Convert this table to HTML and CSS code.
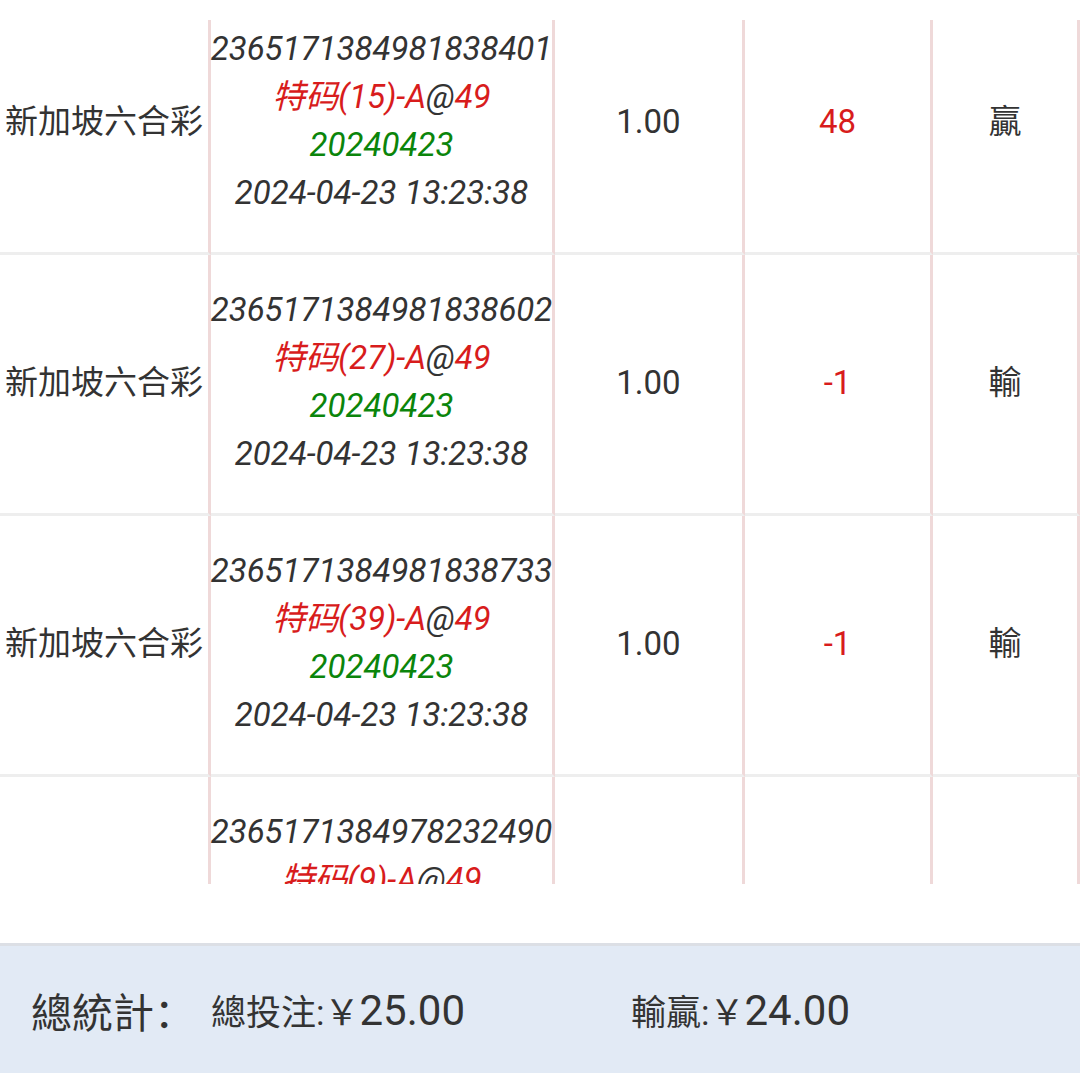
FILE: index.html
```html
<!DOCTYPE html>
<html lang="zh">
<head>
<meta charset="utf-8">
<link rel="stylesheet" href="styles.css">
</head>
<body>
<div class="page">
  <div class="list">
    <div class="table">
      <div class="row">
        <div class="cell name">新加坡六合彩</div>
        <div class="cell info">
          <div class="line">2365171384981838401</div>
          <div class="line"><span class="red">特码(15)-A</span>@<span class="red">49</span></div>
          <div class="line green">20240423</div>
          <div class="line">2024-04-23 13:23:38</div>
        </div>
        <div class="cell">1.00</div>
        <div class="cell red">48</div>
        <div class="cell cjk">贏</div>
      </div>
      <div class="row">
        <div class="cell name">新加坡六合彩</div>
        <div class="cell info">
          <div class="line">2365171384981838602</div>
          <div class="line"><span class="red">特码(27)-A</span>@<span class="red">49</span></div>
          <div class="line green">20240423</div>
          <div class="line">2024-04-23 13:23:38</div>
        </div>
        <div class="cell">1.00</div>
        <div class="cell red">-1</div>
        <div class="cell cjk">輸</div>
      </div>
      <div class="row">
        <div class="cell name">新加坡六合彩</div>
        <div class="cell info">
          <div class="line">2365171384981838733</div>
          <div class="line"><span class="red">特码(39)-A</span>@<span class="red">49</span></div>
          <div class="line green">20240423</div>
          <div class="line">2024-04-23 13:23:38</div>
        </div>
        <div class="cell">1.00</div>
        <div class="cell red">-1</div>
        <div class="cell cjk">輸</div>
      </div>
      <div class="row">
        <div class="cell name">新加坡六合彩</div>
        <div class="cell info">
          <div class="line">2365171384978232490</div>
          <div class="line"><span class="red">特码(9)-A</span>@<span class="red">49</span></div>
          <div class="line green">20240423</div>
          <div class="line">2024-04-23 13:23:38</div>
        </div>
        <div class="cell">1.00</div>
        <div class="cell red">-1</div>
        <div class="cell cjk">輸</div>
      </div>
    </div>
  </div>
  <div class="footer">
    <div class="total-label">總統計：</div>
    <div class="stat"><span class="k">總投注:</span><span class="yen">￥</span><span class="v">25.00</span></div>
    <div class="stat"><span class="k">輸贏:</span><span class="yen">￥</span><span class="v">24.00</span></div>
  </div>
</div>
</body>
</html>
```

FILE: styles.css
```css
* { box-sizing: border-box; }
html, body {
  margin: 0;
  padding: 0;
  background: #ffffff;
}
body {
  font-family: Roboto, "Noto Sans CJK SC", sans-serif;
  color: #333333;
}
.page {
  height: 1073px;
  display: flex;
  flex-direction: column;
}
.list {
  margin-top: 20px;
  height: 864px;
  overflow: hidden;
}
.table {
  margin-top: -26px;
}
.row {
  display: grid;
  grid-template-columns: 211px 344px 190px 188px 147px;
}
.cell {
  display: flex;
  align-items: center;
  justify-content: center;
  border-right: 3px solid #efd9d9;
  border-bottom: 3px solid #eeeeee;
  font-size: 33px;
  white-space: nowrap;
  padding-bottom: 4px;
}
.name, .cjk {
  padding-bottom: 9px;
}
.info {
  flex-direction: column;
  padding: 31px 0 35px;
  font-style: italic;
  font-size: 33px;
}
.line {
  line-height: 48px;
  white-space: nowrap;
}
.red { color: #d81c1c; }
.green { color: #0b850b; }
.footer {
  margin-top: auto;
  height: 130px;
  background: #e2eaf5;
  border-top: 3px solid #dcdfe5;
  display: flex;
  align-items: center;
  padding: 0 29px 0 31px;
}
.total-label {
  font-size: 41px;
  width: 180px;
}
.stat {
  flex: 1;
  display: flex;
  align-items: baseline;
  white-space: nowrap;
}
.k {
  font-size: 35px;
}
.yen {
  font-size: 35px;
}
.v {
  font-size: 42px;
}
```
